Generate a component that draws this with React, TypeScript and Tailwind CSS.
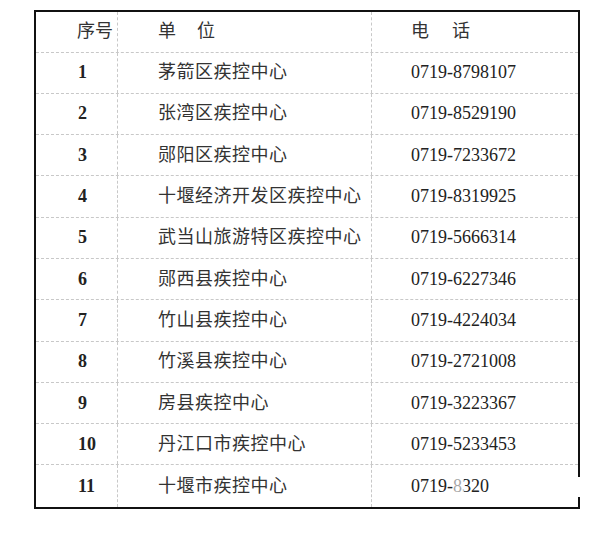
import React from "react";

const rows: [string, string, string][] = [
  ["1", "茅箭区疾控中心", "0719-8798107"],
  ["2", "张湾区疾控中心", "0719-8529190"],
  ["3", "郧阳区疾控中心", "0719-7233672"],
  ["4", "十堰经济开发区疾控中心", "0719-8319925"],
  ["5", "武当山旅游特区疾控中心", "0719-5666314"],
  ["6", "郧西县疾控中心", "0719-6227346"],
  ["7", "竹山县疾控中心", "0719-4224034"],
  ["8", "竹溪县疾控中心", "0719-2721008"],
  ["9", "房县疾控中心", "0719-3223367"],
  ["10", "丹江口市疾控中心", "0719-5233453"],
  ["11", "十堰市疾控中心", "0719-8320"],
];

const font = { fontFamily: '"Liberation Serif", "Noto Sans CJK SC", serif' };

export default function App() {
  return (
    <div className="relative w-[616px] h-[533px] bg-white pl-[34px] pt-[10px]" style={font}>
      <div className="w-[546px] border-2 border-[#111]">
        {/* header */}
        <div className="flex h-[40.5px] border-b border-dashed border-[#c8c8c8] text-[18px] text-[#333]">
          <div className="w-[82px] pl-[41px] flex items-center border-r border-dashed border-[#c8c8c8]">序号</div>
          <div className="w-[254px] pl-[40px] flex items-center border-r border-dashed border-[#c8c8c8]">
            <span>单</span>
            <span className="ml-[21px]">位</span>
          </div>
          <div className="flex-1 pl-[39px] flex items-center">
            <span>电</span>
            <span className="ml-[23px]">话</span>
          </div>
        </div>
        {rows.map(([no, unit, tel], i) => (
          <div
            key={no}
            className={`flex h-[41.3px] text-[18px] text-[#222] ${
              i < rows.length - 1 ? "border-b border-dashed border-[#c8c8c8]" : ""
            }`}
          >
            <div className="w-[82px] pl-[42px] flex items-center font-bold border-r border-dashed border-[#c8c8c8]">
              {no}
            </div>
            <div className="w-[254px] pl-[40px] flex items-center tracking-[0.5px] text-[#333] border-r border-dashed border-[#c8c8c8]">
              {unit}
            </div>
            <div className="flex-1 pl-[39px] flex items-center">{tel}</div>
          </div>
        ))}
      </div>
      {/* smudged end of the last phone number */}
      <div className="absolute left-[500px] top-[477px] w-[84px] h-[20px] bg-white" />
      <div className="absolute left-[453px] top-[478px] w-[11px] h-[18px] bg-white/60" />
    </div>
  );
}
